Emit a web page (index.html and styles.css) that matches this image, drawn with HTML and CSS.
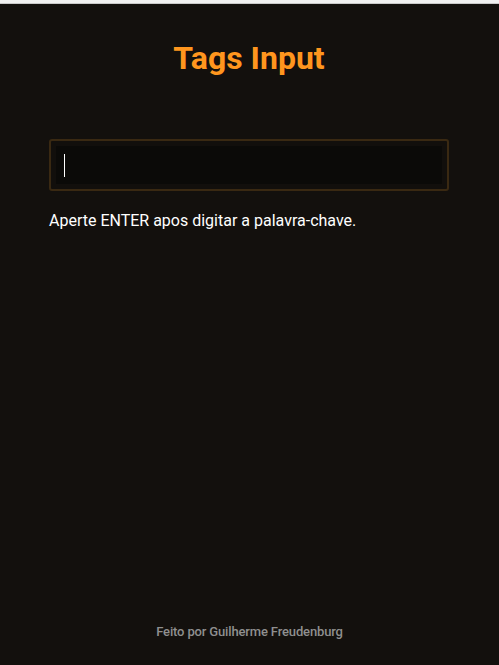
FILE: index.html
```html
<!DOCTYPE html>
<html lang="pt">
<head>
<meta charset="utf-8">
<title>Tags Input</title>
<link rel="stylesheet" href="styles.css">
</head>
<body>
<div class="topbar"></div>
<main class="page">
  <h1 class="title">Tags Input</h1>
  <div class="tags-box">
    <div class="tags-field"><span class="caret"></span></div>
  </div>
  <p class="hint">Aperte ENTER apos digitar a palavra-chave.</p>
</main>
<footer class="footer">Feito por Guilherme Freudenburg</footer>
</body>
</html>
```
FILE: styles.css
```css
html, body {
  margin: 0;
  padding: 0;
  height: 100%;
}
body {
  background: #13100d;
  font-family: Roboto, "Liberation Sans", sans-serif;
  display: flex;
  flex-direction: column;
  min-height: 100vh;
}
.topbar {
  height: 3px;
  background: #f1f1f1;
  border-bottom: 1px solid #c9c9c9;
}
.page {
  flex: 1;
  padding: 0 50px 0 49px;
  display: flex;
  flex-direction: column;
}
.title {
  margin: 34px 0 0;
  text-align: center;
  color: #ff961e;
  font-size: 32px;
  font-weight: 700;
  line-height: 40px;
}
.tags-box {
  margin-top: 61px;
  border: 2px solid #3a2912;
  border-radius: 3px;
  padding: 5px;
  background: #120f0c;
}
.tags-field {
  height: 38px;
  background: #0b0a08;
  padding: 8px 8px;
  box-sizing: border-box;
  display: flex;
  align-items: center;
}
.caret {
  display: block;
  width: 1px;
  height: 23px;
  background: #ffffff;
}
.hint {
  margin: 20px 0 0;
  color: #ffffff;
  font-size: 16px;
  line-height: 20px;
}
.footer {
  text-align: center;
  color: #8f8f8f;
  font-size: 13px;
  font-weight: 500;
  letter-spacing: -0.15px;
  line-height: 16px;
  padding-bottom: 25px;
}
```
